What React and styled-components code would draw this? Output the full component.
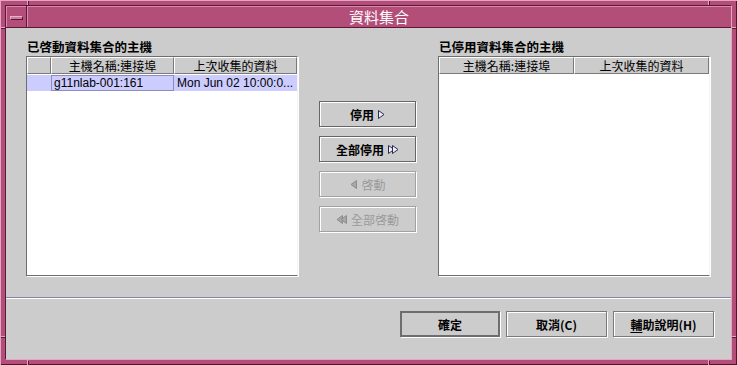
import React from 'react';
import styled, { createGlobalStyle } from 'styled-components';

const Global = createGlobalStyle`
  html, body { margin: 0; padding: 0; background: #cccccc; }
  body { font-family: "Liberation Sans", "Noto Sans CJK TC", sans-serif; font-size: 12px; }
`;

const Frame = styled.div`
  position: relative;
  width: 737px;
  height: 365px;
  box-sizing: border-box;
  background: #b24e78;
  padding: 5px;
  box-shadow: inset 1px 1px 0 #e4a4c2, inset -1px -1px 0 #4e1430;
  display: flex;
`;

const Notch = styled.span`
  position: absolute;
  background: #e4a4c2;
  box-shadow: 1px 1px 0 #5a1836;
  ${(p) => (p.$v ? 'width: 1px; height: 5px;' : 'width: 5px; height: 1px;')}
`;

const Inner = styled.div`
  flex: 1;
  display: flex;
  flex-direction: column;
  border: 1px solid;
  border-color: #5a1836 #e4a4c2 #e4a4c2 #5a1836;
`;

const TitleBar = styled.div`
  height: 21px;
  display: flex;
  background: #b24e78;
  border-bottom: 1px solid #5a1836;
`;

const MenuBtn = styled.div`
  width: 20px;
  display: flex;
  align-items: center;
  justify-content: center;
  border-right: 1px solid #5a1836;
  box-shadow: inset 1px 1px 0 #d88cb0;
`;

const MinMark = styled.div`
  width: 13px;
  height: 4px;
  margin-top: 2px;
  background: #cc7aa0;
  border-top: 1px solid #e8b0ca;
  border-left: 1px solid #e8b0ca;
  border-right: 1px solid #5a1836;
  border-bottom: 1px solid #5a1836;
  box-sizing: border-box;
`;

const Title = styled.div`
  flex: 1;
  display: flex;
  align-items: center;
  justify-content: center;
  color: #ffffff;
  font-family: "Noto Sans CJK TC", sans-serif;
  font-size: 15px;
  box-shadow: inset 1px 1px 0 #d88cb0;
`;

const Body = styled.div`
  flex: 1;
  background: #cccccc;
  display: flex;
  flex-direction: column;
`;

const Main = styled.div`
  display: grid;
  grid-template-columns: 272px 98px 272px;
  column-gap: 21px;
  padding: 10px 0 0 20px;
`;

const Panel = styled.div`
  display: flex;
  flex-direction: column;
`;

const Label = styled.div`
  height: 18px;
  line-height: 18px;
  font-family: "Noto Sans CJK TC", sans-serif;
  font-weight: 700;
  font-size: 12.5px;
  color: #000;
  padding-left: 1px;
`;

const Table = styled.div`
  height: 220px;
  box-sizing: border-box;
  background: #ffffff;
  border: 1px solid;
  border-color: #6e6e6e #f4f4f4 #6e6e6e #6e6e6e;
  box-shadow: 1px 1px 0 #ffffff;
`;

const HeaderRow = styled.div`
  display: grid;
  grid-template-columns: ${(p) => p.$cols};
  height: 17px;
`;

const HeaderCell = styled.div`
  background: #cccccc;
  border-top: 1px solid #ffffff;
  border-left: 1px solid #ffffff;
  border-right: 1px solid #7a7a7a;
  border-bottom: 1px solid #7a7a7a;
  box-sizing: border-box;
  text-align: center;
  font-family: "Noto Sans CJK TC", sans-serif;
  font-size: 12px;
  line-height: 15px;
  color: #000;
  overflow: hidden;
  white-space: nowrap;
`;

const DataRow = styled.div`
  display: grid;
  grid-template-columns: ${(p) => p.$cols};
  height: 16px;
  margin-top: 1px;
  background: ${(p) => (p.$selected ? '#ccccff' : '#ffffff')};
`;

const DataCell = styled.div`
  box-sizing: border-box;
  padding-left: 2px;
  font-family: "Liberation Sans", sans-serif;
  font-size: 12px;
  line-height: 14px;
  color: #000;
  white-space: nowrap;
  overflow: hidden;
  border: 1px solid ${(p) => (p.$focus ? '#8c8cc0' : 'transparent')};
`;

const ButtonCol = styled.div`
  display: flex;
  flex-direction: column;
  gap: 9px;
  padding-top: 63px;
`;

const ActionBtn = styled.div`
  width: 97px;
  height: 26px;
  box-sizing: border-box;
  display: flex;
  align-items: center;
  justify-content: center;
  gap: 4px;
  background: #cccccc;
  border: 1px solid ${(p) => (p.$disabled ? '#a2a2a2' : '#666666')};
  box-shadow: inset 1px 1px 0 #ffffff, 1px 1px 0 #ffffff;
  color: ${(p) => (p.$disabled ? '#9a9a9a' : '#000000')};
  font-family: "Noto Sans CJK TC", sans-serif;
  font-weight: ${(p) => (p.$disabled ? 400 : 700)};
  font-size: 12px;
`;

const Separator = styled.div`
  margin-top: 21px;
  height: 1px;
  background: #8484aa;
  border-bottom: 1px solid #ffffff;
`;

const Footer = styled.div`
  display: flex;
  justify-content: flex-end;
  gap: 6px;
  padding: 12px 17px 0 0;
`;

const FooterBtn = styled.div`
  width: ${(p) => p.$w}px;
  height: 26px;
  box-sizing: border-box;
  display: flex;
  align-items: center;
  justify-content: center;
  background: #cccccc;
  border: ${(p) => (p.$default ? '2px solid #6e6e6e' : '1px solid #7a7a7a')};
  box-shadow: ${(p) => (p.$default ? '1px 1px 0 #ffffff' : 'inset 1px 1px 0 #ffffff, 1px 1px 0 #ffffff')};
  font-family: "Noto Sans CJK TC", sans-serif;
  font-weight: 700;
  font-size: 12px;
  color: #000;
`;

const Mnemonic = styled.span`
  text-decoration: underline;
  text-underline-offset: 2px;
`;

const RightArrow = ({ double }) => (
  <svg width={double ? 11 : 7} height="9" viewBox={double ? '0 0 11 9' : '0 0 7 9'}>
    {double && <polygon points="0.5,0.5 6,4.5 0.5,8.5" fill="#eeeeff" stroke="#2a2a50" strokeWidth="1" />}
    <polygon
      points={double ? '4.5,0.5 10,4.5 4.5,8.5' : '0.5,0.5 6,4.5 0.5,8.5'}
      fill="#eeeeff"
      stroke="#2a2a50"
      strokeWidth="1"
    />
  </svg>
);

const LeftArrow = ({ double }) => (
  <svg width={double ? 11 : 8} height="9" viewBox={double ? '0 0 11 9' : '0 0 8 9'}>
    {double && <polygon points="6.5,0.5 1,4.5 6.5,8.5" fill="#a8a8a8" stroke="#8c8c8c" strokeWidth="1" />}
    <polygon
      points={double ? '10.5,0.5 5,4.5 10.5,8.5' : '7.5,0.5 2,4.5 7.5,8.5'}
      fill="#a8a8a8"
      stroke="#8c8c8c"
      strokeWidth="1"
    />
  </svg>
);

const leftCols = '24px 123px 123px';
const rightCols = '135px 135px';

export default function App() {
  return (
    <>
      <Global />
      <Frame>
        <Notch $v style={{ left: 27, top: 0 }} />
        <Notch $v style={{ left: 708, top: 0 }} />
        <Notch style={{ left: 0, top: 27 }} />
        <Notch style={{ left: 731, top: 27 }} />
        <Notch $v style={{ left: 27, top: 360 }} />
        <Notch $v style={{ left: 708, top: 360 }} />
        <Notch style={{ left: 0, top: 336 }} />
        <Notch style={{ left: 731, top: 336 }} />
        <Inner>
          <TitleBar>
            <MenuBtn>
              <MinMark />
            </MenuBtn>
            <Title>資料集合</Title>
          </TitleBar>
          <Body>
            <Main>
              <Panel>
                <Label>已啓動資料集合的主機</Label>
                <Table>
                  <HeaderRow $cols={leftCols}>
                    <HeaderCell />
                    <HeaderCell>主機名稱:連接埠</HeaderCell>
                    <HeaderCell>上次收集的資料</HeaderCell>
                  </HeaderRow>
                  <DataRow $cols={leftCols} $selected>
                    <DataCell />
                    <DataCell $focus>g11nlab-001:161</DataCell>
                    <DataCell>Mon Jun 02 10:00:0...</DataCell>
                  </DataRow>
                </Table>
              </Panel>
              <ButtonCol>
                <ActionBtn>
                  停用 <RightArrow />
                </ActionBtn>
                <ActionBtn>
                  全部停用 <RightArrow double />
                </ActionBtn>
                <ActionBtn $disabled>
                  <LeftArrow /> 啓動
                </ActionBtn>
                <ActionBtn $disabled>
                  <LeftArrow double /> 全部啓動
                </ActionBtn>
              </ButtonCol>
              <Panel>
                <Label>已停用資料集合的主機</Label>
                <Table>
                  <HeaderRow $cols={rightCols}>
                    <HeaderCell>主機名稱:連接埠</HeaderCell>
                    <HeaderCell>上次收集的資料</HeaderCell>
                  </HeaderRow>
                </Table>
              </Panel>
            </Main>
            <Separator />
            <Footer>
              <FooterBtn $w={100} $default>確定</FooterBtn>
              <FooterBtn $w={101}>取消(C)</FooterBtn>
              <FooterBtn $w={101}>
                <Mnemonic>輔</Mnemonic>助說明(H)
              </FooterBtn>
            </Footer>
          </Body>
        </Inner>
      </Frame>
    </>
  );
}
